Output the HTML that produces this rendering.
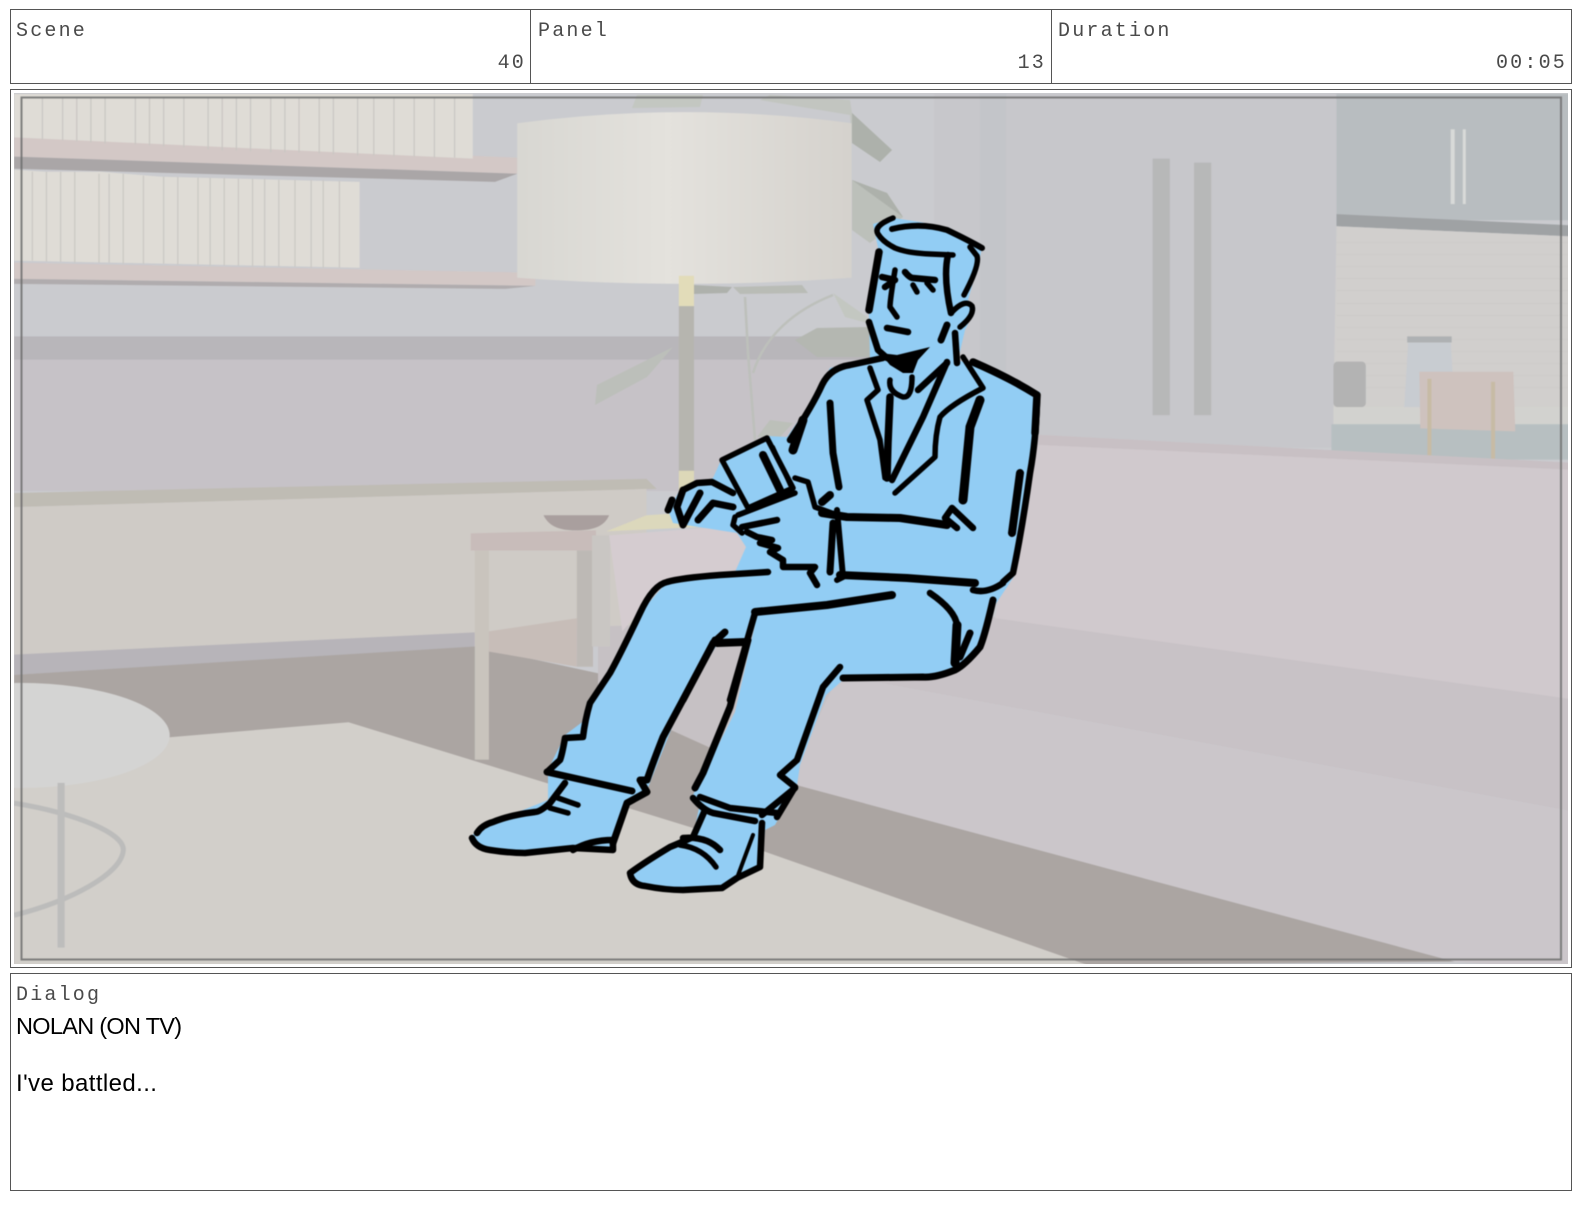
<!DOCTYPE html>
<html>
<head>
<meta charset="utf-8">
<title>Storyboard panel</title>
<style>
html,body{margin:0;padding:0;background:#fff;width:1584px;height:1224px;overflow:hidden}
.box{position:absolute;box-sizing:border-box;border:1px solid #555;background:#fff}
.lbl{position:absolute;font-family:"Liberation Mono",monospace;font-size:20px;letter-spacing:2.2px;color:#4a4a4a;line-height:24px;white-space:pre}
.val{text-align:right}
.txt{position:absolute;font-family:"Liberation Sans",sans-serif;font-size:24px;color:#000;line-height:28px;white-space:pre}
svg{position:absolute;left:0;top:0}
</style>
</head>
<body>
<div class="box" style="left:10px;top:9px;width:1562px;height:75px"></div>
<div class="box" style="left:530px;top:9px;width:1px;height:75px;border-width:0 0 0 1px"></div>
<div class="box" style="left:1051px;top:9px;width:1px;height:75px;border-width:0 0 0 1px"></div>
<div class="lbl" style="left:16px;top:20px">Scene</div>
<div class="lbl val" style="left:400px;width:126px;top:52px">40</div>
<div class="lbl" style="left:538px;top:20px">Panel</div>
<div class="lbl val" style="left:920px;width:126px;top:52px">13</div>
<div class="lbl" style="left:1058px;top:20px">Duration</div>
<div class="lbl val" style="left:1440px;width:127px;top:52px">00:05</div>
<div class="box" style="left:10px;top:89px;width:1562px;height:879px"></div>
<svg width="1584" height="1224" viewBox="0 0 1584 1224">
<defs>
<clipPath id="c"><rect x="14" y="93" width="1554" height="871"/></clipPath>
<linearGradient id="sh" x1="0" x2="1" y1="0" y2="0">
<stop offset="0" stop-color="#d8d7d2"/><stop offset=".45" stop-color="#e4e2dd"/><stop offset="1" stop-color="#d5d2cd"/>
</linearGradient>
</defs>
<g clip-path="url(#c)">
<g style="filter:blur(.4px)">
<g transform="scale(1.0102)">
<rect x="10" y="90" width="1550" height="870" fill="#cacbcf"/>
<rect x="14" y="356" width="900" height="130" fill="#c6c2c7"/>
<rect x="14" y="333" width="900" height="23" fill="#b8b6ba"/>
<rect x="925" y="93" width="400" height="350" fill="#c7c7cb"/>
<rect x="970" y="93" width="26" height="350" fill="#c3c5c9"/>
<rect x="1141" y="157" width="17" height="254" fill="#b7b8b8"/>
<rect x="1182" y="161" width="17" height="250" fill="#b7b8b8"/>
<rect x="1323" y="93" width="232" height="125" fill="#b8bdc0"/>
<polygon points="1323,212 1555,223 1555,234 1323,224" fill="#9fa2a4"/>
<polygon points="1323,224 1555,234 1555,415 1320,405" fill="#d1cfcd"/>
<path d="M1323,240H1555M1323,252H1555M1323,264H1555M1323,276H1555M1323,288H1555M1323,300H1555M1323,312H1555M1323,324H1555M1323,336H1555M1323,348H1555M1323,360H1555M1323,372H1555M1323,384H1555" stroke="#cdcbc9" stroke-width="1"/>
<rect x="1320" y="358" width="32" height="45" rx="4" fill="#b3b3b3"/>
<polygon points="1394,338 1436,338 1440,405 1390,405" fill="#c8ccd1"/>
<rect x="1393" y="333" width="44" height="6" fill="#aeb1b3"/>
<rect x="1320" y="403" width="235" height="17" fill="#d2d2cf"/>
<rect x="1318" y="420" width="237" height="35" fill="#b7bfc1"/>
<polygon points="1405,368 1498,368 1500,427 1406,424" fill="#cec2be"/>
<rect x="1413" y="375" width="4" height="80" fill="#c7bba5"/>
<rect x="1476" y="378" width="4" height="78" fill="#c7bba5"/>
<rect x="1436" y="128" width="4" height="74" fill="#d8dad8"/>
<rect x="1448" y="128" width="3" height="74" fill="#d8dad8"/>
<polygon points="14,136 512,156 512,172 14,155" fill="#d3c8c6"/>
<polygon points="14,155 512,172 490,180 14,167" fill="#aaa6a7"/>
<polygon points="14,93 468,93 468,157 14,136" fill="#dfdcd6"/>
<path d="M42,97V138M62,97V139M76,97V140M90,97V141M104,97V142M134,97V143M148,97V144M162,97V145M182,97V146M206,97V148M220,97V149M234,97V149M248,97V150M268,97V151M282,97V151M296,97V151M316,97V152M330,97V153M354,97V154M370,97V154M390,97V155M410,97V155M430,97V156M450,97V156" stroke="#c9c7c3" stroke-width="1.2"/>
<polygon points="14,168 45,170 100,170 160,175 280,178 356,180 356,265 14,258" fill="#dfdcd6"/>
<path d="M32,170V258M46,170V259M60,170V259M74,170V260M98,172V260M108,172V260M122,172V261M142,174V261M162,175V261M176,175V262M196,176V262M208,176V263M222,176V263M236,177V263M250,177V264M262,177V264M276,178V264M292,178V264M308,178V265M320,178V265M336,179V265" stroke="#cac8c4" stroke-width="1.2"/>
<polygon points="14,260 530,270 530,283 14,276" fill="#d3c8c6"/>
<polygon points="14,276 530,283 500,286 14,281" fill="#b0acae"/>
<polygon points="14,488 640,474 650,484 14,502" fill="#bfbcb4"/>
<polygon points="14,502 640,484 640,620 14,650" fill="#cfcbc6"/>
<polygon points="14,648 470,626 470,642 14,668" fill="#b7b4b9"/>
<polygon points="14,668 470,640 700,690 1100,960 400,960 14,960" fill="#aba5a2"/>
<polygon points="14,760 165,730 345,715 720,830 1090,960 14,960" fill="#d2cfca"/>
<polygon points="592,620 1020,610 1000,790 780,775 592,690" fill="#c6c1c4"/>
<polygon points="1020,437 1555,465 1555,695 985,612" fill="#d0c9cd"/>
<polygon points="985,612 1555,692 1555,803 830,668" fill="#c8c2c6"/>
<polygon points="830,668 1555,803 1555,960 1440,952 780,775" fill="#cbc6ca"/>
<polygon points="660,735 780,775 1440,952 1090,955" fill="#aba5a2"/>
<polygon points="1020,430 1555,458 1555,465 1020,440" fill="#c8c0c4"/>
<ellipse cx="20" cy="728" rx="148" ry="52" fill="#d4d4d3"/>
<path d="M14,795 C75,805 124,825 122,842 C120,865 70,892 14,906" fill="none" stroke="#bcbcbb" stroke-width="5"/>
<rect x="57" y="775" width="7" height="163" fill="#bdbdbc"/>
<polygon points="466,528 590,525 590,545 466,545" fill="#c8bcba"/>
<rect x="470" y="545" width="14" height="207" fill="#c9c4bd"/>
<rect x="571" y="545" width="16" height="115" fill="#bdb9b5"/>
<polygon points="484,625 571,612 571,660 484,645" fill="#c7bdb8"/>
<rect x="586" y="530" width="18" height="110" fill="#c9c6c3"/>
<polygon points="603,530 735,520 745,585 650,585 616,625" fill="#d5ccd0"/>
<polygon points="600,526 640,510 720,505 730,520" fill="#dcd8bc"/>
<path d="M538,510 H603 C598,522 585,525 570,525 C552,525 543,520 538,510Z" fill="#a99f9e"/>
</g>
<!-- plant, true coords -->
<polygon points="632,108 637,95 703,95 700,107" fill="#c3c7c1"/>
<polygon points="760,100 770,95 850,100 852,113 892,150 880,162 852,143 850,115" fill="#c2c5c0"/>
<polygon points="852,113 892,150 880,162 852,143" fill="#adb1ab"/>
<polygon points="852,180 887,193 903,217 870,243 852,230" fill="#bcc0ba"/>
<polygon points="852,180 887,193 903,217" fill="#adb1ab"/>
<polygon points="693,285 732,287 727,293 693,294" fill="#aeb1ac"/>
<polygon points="733,287 802,285 808,293 740,294" fill="#b9bcb6"/>
<polygon points="833,293 867,317 867,323 845,317" fill="#c3c7c1"/>
<polygon points="795,340 817,328 870,327 877,357 817,357" fill="#b4b7b1"/>
<polygon points="597,385 673,347 647,377 595,405" fill="#bcbfba"/>
<polygon points="757,437 770,420 793,423 780,437" fill="#bcc0b9"/>
<path d="M745,297 L748,353 L755,440 M753,373 C765,335 795,310 833,295" fill="none" stroke="#bdc0bb" stroke-width="2.5"/>
<g transform="scale(1.0102)">
<rect x="672" y="303" width="15" height="165" fill="#b6b5af"/>
<rect x="672" y="466" width="15" height="30" fill="#ddd8b8"/>
<path d="M512,122 Q678,100 843,122 V275 Q678,287 512,275Z" fill="url(#sh)"/>
<rect x="672" y="273" width="15" height="30" fill="#e2dcb9"/>
</g>
<rect x="21.5" y="97.5" width="1539.5" height="862" fill="none" stroke="#6e6e6e" stroke-width="2" opacity=".85"/>
<!-- figure -->
<path fill="#92cdf4" d="M873,224 L893,218 L920,222 L950,228 L982,248 L978,265 L968,300 L975,310 L965,330 L958,360 L985,370 L1040,392 L1037,440 L1032,480 L1015,575 L1005,590 L995,605 L982,650 L955,672 L925,680 L843,680 L826,695 L800,765 L797,785 L775,825 L765,830 L762,868 L740,880 L722,890 L640,886 L630,873 L672,848 L693,837 L700,803 L693,795 L735,712 L755,625 L745,642 L720,640 L683,700 L647,790 L625,810 L613,850 L525,853 L480,845 L472,835 L493,822 L548,800 L548,770 L565,735 L585,720 L640,613 L667,582 L735,572 L746,547 L737,533 L673,523 L668,510 L680,490 L713,478 L722,458 L767,436 L787,437 L813,400 L830,368 L870,358 L869,322 L869,290 L879,252Z"/>
<g fill="none" stroke="#000" stroke-linecap="round" stroke-linejoin="round">
<g stroke-width="5.5">
<path d="M893,218 Q873,226 878,234 Q883,242 895,248 Q907,253 930,254 L953,255"/>
<path d="M892,229 Q920,222 947,230 Q968,240 982,248" stroke-width="6"/>
<path d="M970,247 L977,256 Q980,265 964,295"/>
<path d="M951,313 Q965,298 972,306 Q975,315 960,327"/>
<path d="M895,270 Q890,300 890,307 L897,317"/>
<path d="M882,277 L895,280 L885,287" stroke-width="6.5"/>
<path d="M913,285 L917,292 M927,283 L933,290"/>
<path d="M870,368 L878,390 L867,400 L880,440 L885,478"/>
<path d="M890,380 Q888,392 903,397 Q912,398 912,377"/>
<path d="M963,357 L983,388 Q950,405 940,417 Q935,435 935,457 L895,493"/>
<path d="M722,460 L767,438 L793,488 L748,508Z"/>
<path d="M795,478 L808,482 L815,507 L837,515"/>
<path d="M735,517 L733,525 L742,533"/>
<path d="M742,527 L777,520" stroke-width="6.5"/>
<path d="M738,515 L795,493"/>
<path d="M747,532 L757,537 L772,540 L760,543 L778,548 L770,552 L783,560 L783,567 L815,567 L810,573 L817,585" stroke-width="6.5"/>
<path d="M558,798 L578,805 M550,808 L568,813"/>
<path d="M680,845 Q703,848 716,867"/>
</g>
<g stroke-width="6.5">
<path d="M879,252 L869,310" stroke-width="7.5"/>
<path d="M948,255 Q943,277 951,313"/>
<path d="M941,340 L947,325" stroke-width="7"/>
<path d="M955,333 L957,363"/>
<path d="M869,322 L878,350 L887,358"/>
<path d="M905,272 Q910,278 913,278 L935,280"/>
<path d="M887,328 L908,332"/>
<path d="M947,362 L923,417 L892,480"/>
<path d="M947,363 L918,390"/>
<path d="M973,362 Q1010,378 1037,395 L1035,433" stroke-width="7.5"/>
<path d="M1037,400 Q1036,440 1030,473 Q1022,530 1013,573 L1003,582"/>
<path d="M883,358 L850,365 Q830,368 822,385 Q813,405 790,440"/>
<path d="M672,500 L668,510" stroke-width="7"/>
<path d="M683,490 L697,483 L712,482 L733,493"/>
<path d="M683,490 L677,507 L683,525 L700,493" stroke-width="7"/>
<path d="M698,520 L713,503 L733,507" stroke-width="7"/>
<path d="M952,508 L945,518 L957,528 M952,508 L973,528"/>
<path d="M973,590 Q987,594 1003,583"/>
<path d="M755,613 L730,700"/>
<path d="M930,593 Q955,610 957,625 L955,663"/>
<path d="M768,572 L720,575 Q680,578 667,582 Q653,585 640,613 Q620,655 610,673 L590,703 Q585,720 583,737 L565,738 Q562,755 560,760 L547,772"/>
<path d="M565,783 L550,803 Q540,812 535,812 Q510,815 493,822 Q482,825 477,833"/>
<path d="M472,838 Q476,848 490,850 Q510,853 525,853 L573,848 L613,850 L613,840 Q590,840 573,850"/>
<path d="M693,798 Q703,810 713,813 L755,821"/>
<path d="M700,797 L730,808 L777,813"/>
<path d="M840,667 L823,687 L797,760 L780,775 L795,787 L777,817"/>
<path d="M795,788 L762,815"/>
<path d="M705,810 L693,837 Q680,843 670,847 Q645,862 630,873 Q632,885 645,886 Q665,890 683,890 L722,888 L737,878 L760,867 L762,823"/>
<path d="M683,838 Q707,836 720,850"/>
</g>
<g stroke-width="8">
<path d="M890,397 L888,443 L887,478" stroke-width="7.5"/>
<path d="M980,400 L970,427 L963,500" stroke-width="9"/>
<path d="M1020,473 L1012,533"/>
<path d="M803,420 L793,450" stroke-width="9"/>
<path d="M830,403 L833,453 L839,487" stroke-width="7"/>
<path d="M763,455 L780,490"/>
<path d="M773,447 L790,485" stroke-width="4"/>
<path d="M837,510 L843,577 L837,580" stroke-width="6"/>
<path d="M833,523 L830,572" stroke-width="7"/>
<path d="M830,495 L822,502"/>
<path d="M822,513 L847,517 L900,518 L947,525"/>
<path d="M840,575 L907,578 L975,583"/>
<path d="M755,612 L827,605 L892,595"/>
<path d="M725,632 L713,643 L683,700" stroke-width="7"/>
<path d="M717,643 L745,642"/>
<path d="M957,625 L955,663" stroke-width="9"/>
<path d="M970,633 L960,657" stroke-width="7"/>
<path d="M993,600 Q985,635 980,647 Q965,665 955,670 Q935,678 923,677 L843,678" stroke-width="7"/>
<path d="M547,772 L632,791" stroke-width="7"/>
<path d="M715,640 L663,737 Q652,765 647,780 L640,780 L647,792 L627,803 L613,843" stroke-width="7"/>
<path d="M748,640 L730,707 L703,773 L695,788" stroke-width="7"/>
<path d="M737,878 L753,835" stroke-width="4"/>
</g>
</g>
<path d="M880,353 L897,355 L930,347 L918,360 L913,373 L903,373 L890,365Z" fill="#000"/>
</g>
</g>
</svg>
<div class="box" style="left:10px;top:973px;width:1562px;height:218px"></div>
<div class="lbl" style="left:16px;top:984px">Dialog</div>
<div class="txt" style="left:16px;top:1012px;font-size:23.5px;letter-spacing:-0.7px">NOLAN (ON TV)</div>
<div class="txt" style="left:16px;top:1070px;letter-spacing:0.4px">I've battled...</div>
</body>
</html>
